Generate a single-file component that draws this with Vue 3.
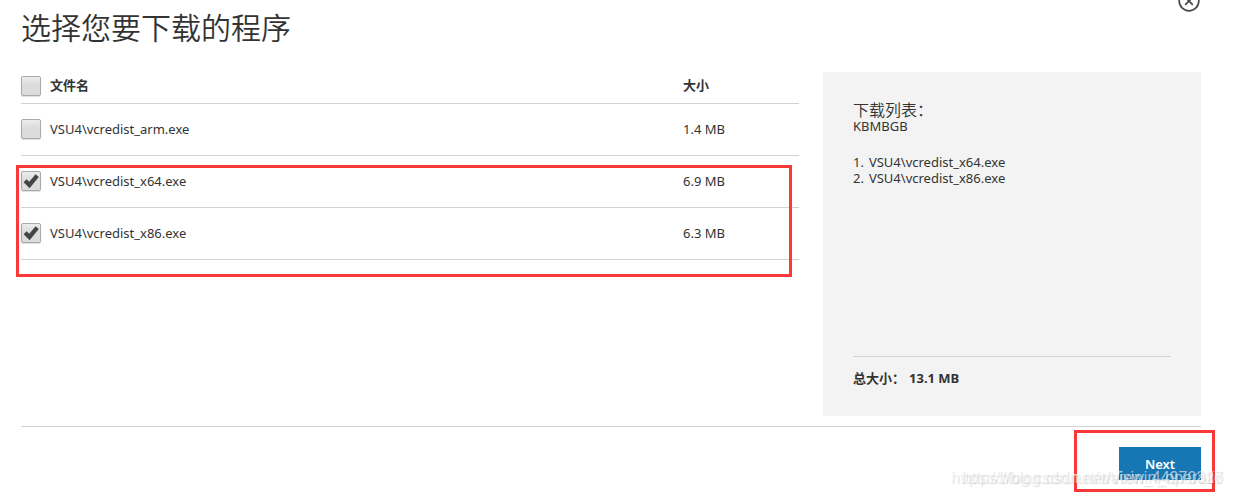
<script setup>
import { ref, computed } from 'vue'

const files = ref([
  { id: 'arm', name: 'VSU4\\vcredist_arm.exe', size: '1.4 MB', checked: false },
  { id: 'x64', name: 'VSU4\\vcredist_x64.exe', size: '6.9 MB', checked: true },
  { id: 'x86', name: 'VSU4\\vcredist_x86.exe', size: '6.3 MB', checked: true },
])
const all = ref(false)
const selected = computed(() => files.value.filter((f) => f.checked))
const toggleAll = () => files.value.forEach((f) => (f.checked = all.value))
</script>

<template>
  <main class="dialog">
    <button class="close" type="button" aria-label="Close">
      <svg width="22" height="22" viewBox="0 0 22 22" fill="none" stroke="#4a4a4a">
        <circle cx="11" cy="11" r="9.8" stroke-width="1.7" />
        <path d="M7.2 7.2l7.6 7.6M14.8 7.2l-7.6 7.6" stroke-width="1.8" />
      </svg>
    </button>

    <h1>选择您要下载的程序</h1>

    <div class="content">
      <div class="files">
        <table>
          <thead>
            <tr>
              <th class="pick"><input v-model="all" type="checkbox" aria-label="全选" @change="toggleAll" /></th>
              <th>文件名</th>
              <th class="size">大小</th>
            </tr>
          </thead>
          <tbody>
            <tr v-for="f in files" :key="f.id">
              <td class="pick">
                <span class="box">
                  <input :id="f.id" v-model="f.checked" type="checkbox" />
                  <svg v-if="f.checked" class="tick" viewBox="0 0 20 20">
                    <path d="M2.6 11.2L5.6 8.2L8.2 10.8L14.6 3.2L17.8 6L8.6 17.2Z" fill="#444" />
                  </svg>
                </span>
              </td>
              <td><label :for="f.id">{{ f.name }}</label></td>
              <td class="size">{{ f.size }}</td>
            </tr>
          </tbody>
        </table>
        <div class="mark mark-files"></div>
      </div>

      <aside>
        <h2>下载列表：</h2>
        <p>KBMBGB</p>
        <ol>
          <li v-for="(f, i) in selected" :key="f.id"><span>{{ i + 1 }}.</span>{{ f.name }}</li>
        </ol>
        <p class="total"><span>总大小：</span><span>13.1 MB</span></p>
      </aside>
    </div>

    <footer>
      <button class="next" type="button">Next</button>
      <div class="mark mark-next"></div>
      <div class="watermark">https://blog.csdn.net/weixin_44970327</div>
      <div class="watermark">https://blog.csdn.net/Viewin_operatio</div>
    </footer>
  </main>
</template>

<style>
body {
  margin: 0;
  background: #fff;
}
</style>

<style scoped>
.dialog {
  position: relative;
  overflow: hidden;
  padding: 8px 32px 17px 21px;
  font: 13px/16px "Noto Sans", "Noto Sans CJK SC", sans-serif;
  color: #333;
}
h1 {
  margin: 0 0 24px;
  font-size: 30px;
  line-height: 40px;
  font-weight: 350;
}
.close {
  position: absolute;
  top: -10px;
  right: 33px;
  width: 22px;
  height: 22px;
  padding: 0;
  border: 0;
  background: none;
}
.close svg {
  display: block;
}
.content {
  display: flex;
  gap: 24px;
}
.files {
  position: relative;
  flex: 1;
}
table {
  width: 100%;
  border-collapse: collapse;
  table-layout: fixed;
}
th,
td {
  padding: 0;
  text-align: left;
  vertical-align: top;
  border-bottom: 1px solid #d2d2d2;
}
th {
  height: 27px;
  padding-top: 4px;
  line-height: 18px;
  font-weight: 700;
}
td {
  height: 36px;
  padding-top: 15px;
  line-height: 20px;
}
.pick {
  width: 29px;
}
.size {
  width: 116px;
}
.box {
  position: relative;
  display: block;
  width: 20px;
  height: 20px;
}
input {
  appearance: none;
  display: block;
  box-sizing: border-box;
  width: 20px;
  height: 20px;
  margin: 0;
  border: 1px solid #a9a9a9;
  border-radius: 2px;
  background: linear-gradient(#ececec, #dcdcdc 45%);
  box-shadow: 0 1px 1px #ddd;
}
.tick {
  position: absolute;
  inset: 0;
  pointer-events: none;
}
aside {
  box-sizing: border-box;
  display: flex;
  flex-direction: column;
  width: 378px;
  min-height: 344px;
  padding: 30px;
  background: #f3f3f3;
}
h2 {
  margin: 0;
  font-size: 16px;
  line-height: 16px;
  font-weight: 350;
}
p {
  margin: 0;
}
ol {
  margin: 20px 0 0;
  padding: 0;
  list-style: none;
}
li {
  display: flex;
  gap: 5px;
}
.total {
  display: flex;
  gap: 4px;
  margin-top: auto;
  padding: 13px 0 0;
  border-top: 1px solid #d2d2d2;
  font-weight: 700;
}
footer {
  position: relative;
  display: flex;
  justify-content: flex-end;
  margin-top: 10px;
  padding-top: 20px;
  border-top: 1px solid #d2d2d2;
}
.next {
  width: 82px;
  height: 33px;
  padding: 1px 0 0;
  border: 0;
  background: #1777b4;
  color: #fff;
  font: 600 13px/32px "Noto Sans", sans-serif;
}
.mark {
  position: absolute;
  box-sizing: border-box;
  border: 3px solid #fb3838;
  pointer-events: none;
}
.mark-files {
  top: 93px;
  left: -5px;
  right: 7px;
  height: 112px;
}
.mark-next {
  top: 3px;
  right: -14px;
  width: 141px;
  height: 62px;
}
.watermark {
  position: absolute;
  top: 41px;
  right: -22px;
  font: 16px/20px "Liberation Sans", sans-serif;
  color: rgba(255, 255, 255, 0.6);
  text-shadow: 1px 1px 1px rgba(0, 0, 0, 0.13);
  white-space: nowrap;
  pointer-events: none;
}
</style>
